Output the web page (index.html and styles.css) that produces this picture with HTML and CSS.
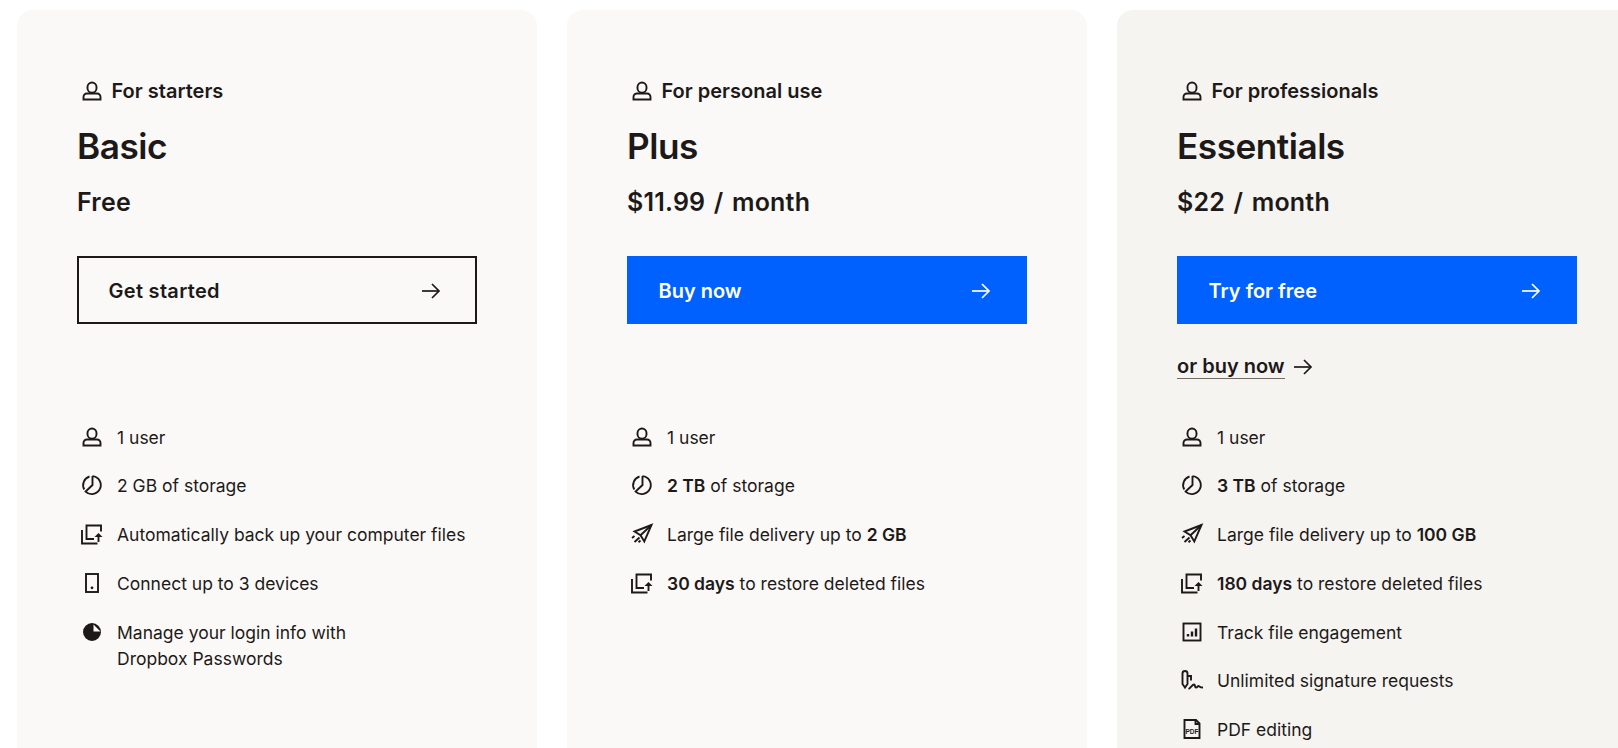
FILE: index.html
```html
<!DOCTYPE html>
<html lang="en">
<head>
<meta charset="utf-8">
<title>Plans</title>
<link rel="stylesheet" href="styles.css">
</head>
<body>
<svg class="defs" width="0" height="0" aria-hidden="true">
  <defs>
    <symbol id="i-user" viewBox="0 0 24 24"><path d="M12 3.500a4.500 4.500 0 0 1 4.500 4.500v1.200a4.500 4.500 0 0 1-9 0V8a4.500 4.500 0 0 1 4.500-4.500z"/><path d="M3.500 20.500v-2.500a3.500 3.500 0 0 1 3.500-3.500h10a3.500 3.500 0 0 1 3.500 3.500v2.500z"/></symbol>
    <symbol id="i-pie" viewBox="0 0 24 24"><path d="M12.500 3.100A9 9 0 1 1 5.600 18.600L12.500 12V3.100"/><path d="M4.300 16.500A9 9 0 0 1 9.500 3.500"/></symbol>
    <symbol id="i-backup" viewBox="0 0 24 24"><path d="M2 8v13.500h15.500"/><path d="M21 9.500V3.500H6.500v13.500h7.500"/><path d="M18.500 20v-6"/><path class="solid" d="M14.500 15l4-4 4 4z"/></symbol>
    <symbol id="i-device" viewBox="0 0 24 24"><rect x="6" y="3" width="12" height="18"/><circle class="solid" cx="12" cy="16.800" r="1.400"/></symbol>
    <symbol id="i-passwords" viewBox="0 0 24 24"><path class="solid" fill-rule="evenodd" d="M12 3a9 9 0 1 1-9 9 9 9 0 0 1 9-9zM13.500 4.500v7h7z"/></symbol>
    <symbol id="i-plane" viewBox="0 0 24 24"><path d="M21.500 3L4.500 9.500l6 3.800 3.800 6.200z"/><path d="M21.500 3L10.500 13.300"/><path d="M9.500 15.500l-5 4.500M4.500 14l-2.500 2M10.500 18.500l-2 1.800"/></symbol>
    <symbol id="i-chart" viewBox="0 0 24 24"><rect x="3.500" y="3.500" width="17" height="17"/><path class="bars" d="M8 16.500v-2.500M12 16.500v-5M16 16.500v-8"/></symbol>
    <symbol id="i-sign" viewBox="0 0 24 24"><path d="M2.500 5.500a2.500 2.500 0 0 1 5 0v10.500l-2.500 3.500-2.500-3.500z"/><path d="M7.500 8h3.500v4.500"/><path d="M8.500 21c2-1 4-4.500 5.500-4.500s.5 3 2 3 1.500-1.500 2.500-1.500 1 1.500 4.500 1.500"/></symbol>
    <symbol id="i-pdf" viewBox="0 0 24 24"><path d="M16 3H4.500v18h15V6.500z"/><path d="M15.500 3v4h4"/></symbol>
    <symbol id="i-arrow" viewBox="0 0 24 24"><path d="M3 12h17"/><path d="M13 5l7 7-7 7"/></symbol>
  </defs>
</svg>

<main class="plans">
  <section class="card">
    <p class="label"><svg class="icon"><use href="#i-user"/></svg>For starters</p>
    <h2 class="name">Basic</h2>
    <p class="price">Free</p>
    <a class="btn btn-outline"><span>Get started</span><svg class="btn-arrow"><use href="#i-arrow"/></svg></a>
    <div class="slot"></div>
    <ul class="features">
      <li><svg class="icon"><use href="#i-user"/></svg><span>1 user</span></li>
      <li><svg class="icon"><use href="#i-pie"/></svg><span>2 GB of storage</span></li>
      <li><svg class="icon"><use href="#i-backup"/></svg><span>Automatically back up your computer files</span></li>
      <li><svg class="icon"><use href="#i-device"/></svg><span>Connect up to 3 devices</span></li>
      <li><svg class="icon"><use href="#i-passwords"/></svg><span>Manage your login info with<br>Dropbox Passwords</span></li>
    </ul>
  </section>

  <section class="card">
    <p class="label"><svg class="icon"><use href="#i-user"/></svg>For personal use</p>
    <h2 class="name">Plus</h2>
    <p class="price">$11.99 / month</p>
    <a class="btn btn-blue"><span>Buy now</span><svg class="btn-arrow"><use href="#i-arrow"/></svg></a>
    <div class="slot"></div>
    <ul class="features">
      <li><svg class="icon"><use href="#i-user"/></svg><span>1 user</span></li>
      <li><svg class="icon"><use href="#i-pie"/></svg><span><b>2 TB</b> of storage</span></li>
      <li><svg class="icon"><use href="#i-plane"/></svg><span>Large file delivery up to <b>2 GB</b></span></li>
      <li><svg class="icon"><use href="#i-backup"/></svg><span><b>30 days</b> to restore deleted files</span></li>
    </ul>
  </section>

  <section class="card card-pro">
    <p class="label"><svg class="icon"><use href="#i-user"/></svg>For professionals</p>
    <h2 class="name">Essentials</h2>
    <p class="price">$22 / month</p>
    <a class="btn btn-blue"><span>Try for free</span><svg class="btn-arrow"><use href="#i-arrow"/></svg></a>
    <div class="slot"><a class="alt-link"><span>or buy now</span><svg class="alt-arrow"><use href="#i-arrow"/></svg></a></div>
    <ul class="features">
      <li><svg class="icon"><use href="#i-user"/></svg><span>1 user</span></li>
      <li><svg class="icon"><use href="#i-pie"/></svg><span><b>3 TB</b> of storage</span></li>
      <li><svg class="icon"><use href="#i-plane"/></svg><span>Large file delivery up to <b>100 GB</b></span></li>
      <li><svg class="icon"><use href="#i-backup"/></svg><span><b>180 days</b> to restore deleted files</span></li>
      <li><svg class="icon"><use href="#i-chart"/></svg><span>Track file engagement</span></li>
      <li><svg class="icon"><use href="#i-sign"/></svg><span>Unlimited signature requests</span></li>
      <li><svg class="icon" viewBox="0 0 24 24"><use href="#i-pdf"/><text class="pdf-mark" x="12" y="16.500">PDF</text></svg><span>PDF editing</span></li>
    </ul>
  </section>
</main>
</body>
</html>
```

FILE: styles.css
```css
html, body {
  margin: 0;
  height: 748px;
  overflow: hidden;
  background: #fff;
}

body {
  font-family: "Inter", "Liberation Sans", sans-serif;
  color: #1e1919;
}

.defs {
  position: absolute;
}

.plans {
  display: grid;
  grid-template-columns: repeat(3, 520px);
  gap: 30px;
  width: 1700px;
  padding: 10px 0 0 17px;
}

.card {
  height: 800px;
  box-sizing: border-box;
  padding: 68px 60px 0;
  background: #faf9f7;
  border-radius: 16px;
}

.card-pro {
  background: #f5f4f1;
}

.icon {
  flex: none;
  width: 24px;
  height: 24px;
  margin: 0 3px;
  fill: none;
  stroke: #1e1919;
  stroke-width: 1.9;
}

.bars {
  stroke-width: 2.4;
}

.solid {
  fill: #1e1919;
  stroke: none;
}

.pdf-mark {
  font-family: "Liberation Sans", sans-serif;
  font-size: 6.500px;
  font-weight: 700;
  text-anchor: middle;
  fill: #1e1919;
  stroke: none;
}

.label {
  display: flex;
  align-items: center;
  gap: 4.500px;
  margin: 0;
  font-size: 20px;
  font-weight: 600;
  line-height: 26px;
}

.name {
  margin: 19.500px 0 0;
  font-size: 35.200px;
  font-weight: 600;
  line-height: 44px;
  letter-spacing: -0.5px;
}

.price {
  margin: 18.500px 0 0;
  font-size: 25px;
  font-weight: 600;
  line-height: 32px;
  word-spacing: 2px;
  letter-spacing: 0.2px;
}

.btn {
  display: flex;
  align-items: center;
  justify-content: space-between;
  box-sizing: border-box;
  width: 400px;
  height: 68px;
  margin-top: 38px;
  padding: 2px 34px 0 31.500px;
  font-size: 20px;
  font-weight: 600;
}

.btn-outline {
  border: 2px solid #1e1919;
  padding: 2px 32px 0 29.500px;
  letter-spacing: 0.3px;
}

.btn-blue {
  background: #0061fe;
  color: #fff;
}

.btn-arrow {
  width: 24px;
  height: 24px;
  fill: none;
  stroke: currentColor;
  stroke-width: 1.700;
}

.slot {
  height: 100.500px;
  box-sizing: border-box;
  padding-top: 30px;
}

.alt-link {
  display: inline-flex;
  align-items: center;
  gap: 6px;
  font-size: 20px;
  font-weight: 600;
  line-height: 24px;
}

.alt-link span {
  border-bottom: 1px solid #736c64;
}

.alt-arrow {
  width: 24px;
  height: 24px;
  fill: none;
  stroke: #1e1919;
  stroke-width: 1.700;
}

.features {
  display: flex;
  flex-direction: column;
  gap: 22.800px;
  margin: 0;
  padding: 0;
  list-style: none;
  font-size: 17.500px;
  line-height: 26px;
  font-weight: 400;
}

.features li {
  display: flex;
  gap: 10px;
}

.features b {
  font-weight: 600;
}
```
